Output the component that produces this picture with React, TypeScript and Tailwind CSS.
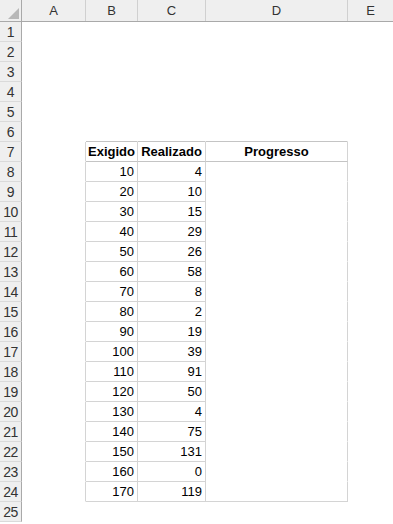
import React from 'react';

const cols = ['A', 'B', 'C', 'D', 'E'];
const widths = ['w-[64px]', 'w-[52px]', 'w-[68px]', 'w-[142px]', 'flex-1'];

const data: [number, number][] = [
  [10, 4], [20, 10], [30, 15], [40, 29], [50, 26], [60, 58], [70, 8], [80, 2], [90, 19],
  [100, 39], [110, 91], [120, 50], [130, 4], [140, 75], [150, 131], [160, 0], [170, 119],
];

const inTable = (r: number) => r >= 7 && r <= 24;

// right border of a cell is a table line for A..D inside rows 7-24
const rightLine = (r: number, c: number) => c <= 3 && inTable(r);

// bottom border: top edge (row 6), header row, every body row in B/C, last row in D
const bottomLine = (r: number, c: number) => {
  if (c < 1 || c > 3) return false;
  if (r === 6 || r === 7 || r === 24) return true;
  if (r > 7 && r < 24) return c !== 3;
  return false;
};

const cellText = (r: number, c: number) => {
  if (r === 7) {
    if (c === 1) return 'Exigido';
    if (c === 2) return 'Realizado';
    if (c === 3) return 'Progresso';
  }
  if (r > 7 && r <= 24) {
    const row = data[r - 8];
    if (c === 1) return String(row[0]);
    if (c === 2) return String(row[1]);
  }
  return '';
};

const App: React.FC = () => {
  const rows = Array.from({ length: 25 }, (_, i) => i + 1);
  return (
    <div className="w-[393px] h-[524px] overflow-hidden bg-white text-black font-['Liberation_Sans',Arial,sans-serif] text-[13px]">
      {/* Column headers */}
      <div className="flex h-[22px] bg-[#efefef] border-b border-[#a9a9a9]">
        <div className="w-[22px] border-r border-[#a9a9a9] flex items-end justify-end p-[2px]">
          <svg width="11" height="11" viewBox="0 0 11 11">
            <polygon points="11,0 11,11 0,11" fill="#b8b8b8" />
          </svg>
        </div>
        {cols.map((c, i) => (
          <div
            key={c}
            className={`${widths[i]} ${i < 4 ? 'border-r border-[#d0d0d0]' : ''} flex items-center justify-center text-[#333] pt-[1px]`}
          >
            {c}
          </div>
        ))}
      </div>

      {/* Sheet rows */}
      {rows.map((r) => (
        <div key={r} className="flex h-[20px]">
          <div className="w-[22px] bg-[#efefef] border-r border-b border-r-[#a9a9a9] border-b-[#dadada] flex items-center justify-center text-[#333] text-[14px] tracking-[-0.5px] pt-[1px]">
            {r}
          </div>
          {cols.map((c, ci) => {
            const txt = cellText(r, ci);
            const header = r === 7;
            return (
              <div
                key={c}
                className={`${widths[ci]} border-r border-b ${rightLine(r, ci) ? 'border-r-[#d4d4d4]' : 'border-r-transparent'} ${bottomLine(r, ci) ? (r === 7 || r === 6 ? 'border-b-[#c4c4c4]' : 'border-b-[#d4d4d4]') : 'border-b-transparent'} flex items-center pt-[1px] ${header ? 'justify-center font-bold' : 'justify-end pr-[3px]'}`}
              >
                {txt}
              </div>
            );
          })}
        </div>
      ))}
    </div>
  );
};

export default App;
